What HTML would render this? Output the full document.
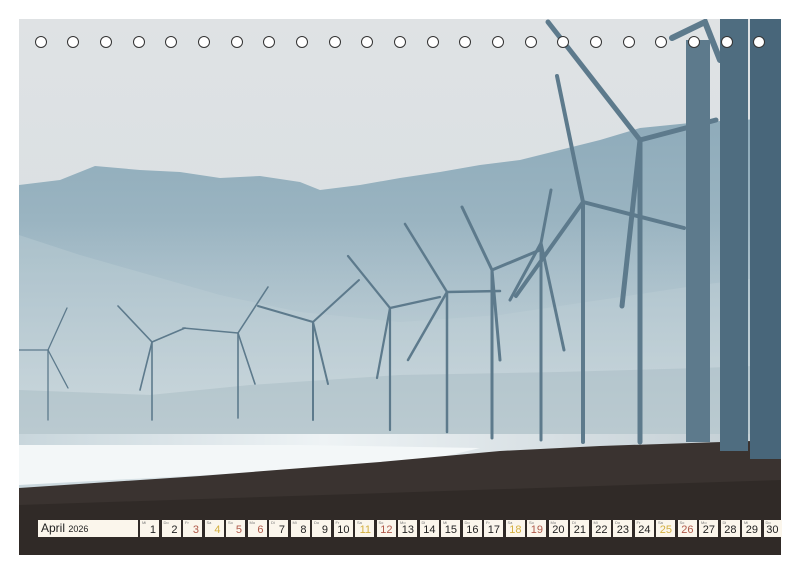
<!DOCTYPE html>
<html><head><style>
body{margin:0;background:#fff;width:800px;height:575px;overflow:hidden;font-family:"Liberation Sans",sans-serif}
.wrap{position:absolute;left:19px;top:19px;width:762px;height:536px;overflow:hidden}
.hole{position:absolute;top:36px;width:12px;height:12px;border-radius:50%;background:#fff;border:1.5px solid #333;box-sizing:border-box}
.month{position:absolute;left:38px;top:520px;width:100px;height:17px;background:#fbf6ec;font-size:12px;line-height:17px;padding-left:3px;box-sizing:border-box;color:#222}
.month small{font-size:9px}
.d{position:absolute;top:520px;width:19px;height:17px;background:#fbf6ec;font-size:11px;color:#222;text-align:right;box-sizing:border-box;padding:3px 3px 0 0;line-height:14px;white-space:nowrap;overflow:hidden}
.d i{position:absolute;left:2px;top:1px;font-size:4px;line-height:4px;font-style:normal;color:#777}
</style></head><body>
<div class="wrap">
<svg width="762" height="536" viewBox="19 19 762 536">
<defs>
<linearGradient id="sky" x1="0" y1="0" x2="0" y2="1"><stop offset="0" stop-color="#dfe2e4"/><stop offset="1" stop-color="#d3dde1"/></linearGradient>
<linearGradient id="m1" x1="0" y1="0" x2="0" y2="1"><stop offset="0" stop-color="#8eabba"/><stop offset="1" stop-color="#b5c8d1"/></linearGradient>
<linearGradient id="haze" x1="0" y1="0" x2="0" y2="1"><stop offset="0" stop-color="#c4d3da" stop-opacity="0"/><stop offset="1" stop-color="#cfdade"/></linearGradient>
<linearGradient id="sea" x1="0" y1="0" x2="1" y2="0"><stop offset="0" stop-color="#c8d6dc"/><stop offset="0.4" stop-color="#eef3f5"/><stop offset="1" stop-color="#c0ccd2"/></linearGradient>
</defs>
<rect x="19" y="19" width="762" height="536" fill="url(#sky)"/>
<path d="M19 185 L60 180 L95 166 L140 170 L180 172 L220 178 L260 176 L300 182 L320 190 L360 185 L400 178 L440 172 L480 165 L520 160 L560 150 L600 140 L640 128 L700 122 L781 118 L781 450 L19 450 Z" fill="url(#m1)"/>
<path d="M19 235 L80 255 L150 275 L220 295 L300 312 L400 322 L500 315 L600 300 L700 285 L781 275 L781 450 L19 450Z" fill="#b3c6ce" opacity="0.6"/>
<rect x="19" y="220" width="762" height="230" fill="url(#haze)"/>
<path d="M19 390 L150 395 L250 385 L400 375 L560 372 L700 368 L781 365 L781 440 L19 440Z" fill="#a8bbc3" opacity="0.5"/>
<rect x="19" y="434" width="762" height="60" fill="url(#sea)"/>
<path d="M19 445 L300 445 L480 448 L430 460 L300 470 L150 478 L19 485Z" fill="#f3f7f8"/>
<path d="M19 488 L200 476 L380 462 L500 451 L600 446 L781 440 L781 555 L19 555Z" fill="#3a3330"/>
<path d="M19 505 L781 480 L781 555 L19 555Z" fill="#2a2422" opacity="0.6"/>
<g fill="#5d7a8c" stroke="#5d7a8c" stroke-linecap="round">
<g stroke-width="1.3"><line x1="48" y1="350" x2="48" y2="420"/><line x1="48" y1="350" x2="67" y2="308"/><line x1="48" y1="350" x2="19" y2="350"/><line x1="48" y1="350" x2="68" y2="388"/></g>
<g stroke-width="1.6"><line x1="152" y1="342" x2="152" y2="420"/><line x1="152" y1="342" x2="118" y2="306"/><line x1="152" y1="342" x2="185" y2="328"/><line x1="152" y1="342" x2="140" y2="390"/></g>
<g stroke-width="1.6"><line x1="238" y1="333" x2="238" y2="418"/><line x1="238" y1="333" x2="268" y2="287"/><line x1="238" y1="333" x2="183" y2="328"/><line x1="238" y1="333" x2="255" y2="384"/></g>
<g stroke-width="2"><line x1="313" y1="322" x2="313" y2="420"/><line x1="313" y1="322" x2="359" y2="280"/><line x1="313" y1="322" x2="258" y2="306"/><line x1="313" y1="322" x2="328" y2="384"/></g>
<g stroke-width="2.2"><line x1="390" y1="308" x2="390" y2="430"/><line x1="390" y1="308" x2="348" y2="256"/><line x1="390" y1="308" x2="440" y2="297"/><line x1="390" y1="308" x2="377" y2="378"/></g>
<g stroke-width="2.5"><line x1="447" y1="292" x2="447" y2="432"/><line x1="447" y1="292" x2="405" y2="224"/><line x1="447" y1="292" x2="500" y2="291"/><line x1="447" y1="292" x2="408" y2="360"/></g>
<g stroke-width="3"><line x1="492" y1="270" x2="492" y2="438"/><line x1="492" y1="270" x2="462" y2="207"/><line x1="492" y1="270" x2="540" y2="250"/><line x1="492" y1="270" x2="500" y2="360"/></g>
<g stroke-width="3"><line x1="541" y1="243" x2="541" y2="440"/><line x1="541" y1="243" x2="551" y2="190"/><line x1="541" y1="243" x2="510" y2="300"/><line x1="541" y1="243" x2="564" y2="350"/></g>
<g stroke-width="4"><line x1="583" y1="202" x2="583" y2="442"/><line x1="583" y1="202" x2="557" y2="76"/><line x1="583" y1="202" x2="684" y2="228"/><line x1="583" y1="202" x2="516" y2="296"/></g>
<g stroke-width="5"><line x1="640" y1="140" x2="640" y2="442"/><line x1="640" y1="140" x2="548" y2="22"/><line x1="640" y1="140" x2="716" y2="120"/><line x1="640" y1="140" x2="622" y2="306"/></g>
<rect x="686" y="40" width="24" height="402" stroke="none"/>
<path d="M672 38 L705 22 L720 60" stroke-width="6" fill="none"/>
<rect x="720" y="19" width="28" height="432" fill="#4f6d80" stroke="none"/>
<rect x="750" y="19" width="31" height="440" fill="#48667a" stroke="none"/>
</g>
</svg>
</div>
<div class="hole" style="left:35px"></div><div class="hole" style="left:67px"></div><div class="hole" style="left:100px"></div><div class="hole" style="left:133px"></div><div class="hole" style="left:165px"></div><div class="hole" style="left:198px"></div><div class="hole" style="left:231px"></div><div class="hole" style="left:263px"></div><div class="hole" style="left:296px"></div><div class="hole" style="left:329px"></div><div class="hole" style="left:361px"></div><div class="hole" style="left:394px"></div><div class="hole" style="left:427px"></div><div class="hole" style="left:459px"></div><div class="hole" style="left:492px"></div><div class="hole" style="left:525px"></div><div class="hole" style="left:557px"></div><div class="hole" style="left:590px"></div><div class="hole" style="left:623px"></div><div class="hole" style="left:655px"></div><div class="hole" style="left:688px"></div><div class="hole" style="left:721px"></div><div class="hole" style="left:753px"></div>
<div class="month">April <small>2026</small></div>
<div class="d" style="left:140px"><i>Mi</i>1</div>
<div class="d" style="left:161.5px"><i>Do</i>2</div>
<div class="d" style="left:183px;color:#b05a4a"><i>Fr</i>3</div>
<div class="d" style="left:204.5px;color:#d4b040"><i>Sa</i>4</div>
<div class="d" style="left:226px;color:#b05a4a"><i>So</i>5</div>
<div class="d" style="left:247.5px;color:#b05a4a"><i>Mo</i>6</div>
<div class="d" style="left:269px"><i>Di</i>7</div>
<div class="d" style="left:290.5px"><i>Mi</i>8</div>
<div class="d" style="left:312px"><i>Do</i>9</div>
<div class="d" style="left:333.5px"><i>Fr</i>10</div>
<div class="d" style="left:355px;color:#d4b040"><i>Sa</i>11</div>
<div class="d" style="left:376.5px;color:#b05a4a"><i>So</i>12</div>
<div class="d" style="left:398px"><i>Mo</i>13</div>
<div class="d" style="left:419.5px"><i>Di</i>14</div>
<div class="d" style="left:441px"><i>Mi</i>15</div>
<div class="d" style="left:462.5px"><i>Do</i>16</div>
<div class="d" style="left:484px"><i>Fr</i>17</div>
<div class="d" style="left:505.5px;color:#d4b040"><i>Sa</i>18</div>
<div class="d" style="left:527px;color:#b05a4a"><i>So</i>19</div>
<div class="d" style="left:548.5px"><i>Mo</i>20</div>
<div class="d" style="left:570px"><i>Di</i>21</div>
<div class="d" style="left:591.5px"><i>Mi</i>22</div>
<div class="d" style="left:613px"><i>Do</i>23</div>
<div class="d" style="left:634.5px"><i>Fr</i>24</div>
<div class="d" style="left:656px;color:#d4b040"><i>Sa</i>25</div>
<div class="d" style="left:677.5px;color:#b05a4a"><i>So</i>26</div>
<div class="d" style="left:699px"><i>Mo</i>27</div>
<div class="d" style="left:720.5px"><i>Di</i>28</div>
<div class="d" style="left:742px"><i>Mi</i>29</div>
<div class="d" style="left:763.5px;width:18px"><i>Do</i>30</div>
</body></html>
